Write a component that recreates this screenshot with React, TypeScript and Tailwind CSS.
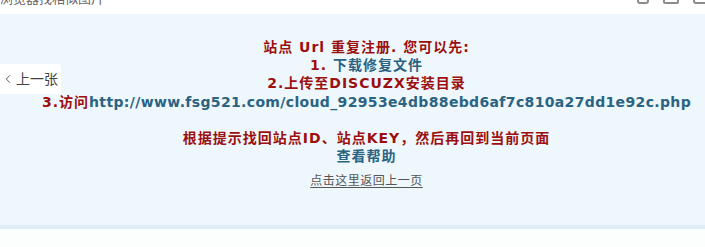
import { ChevronLeft } from "lucide-react";

const red = "text-[#9c0f0f] tracking-[1px]";
const blue = "text-[#2a6383] tracking-[1px]";

export default function App() {
  return (
    <div
      className="relative h-[247px] w-[705px] overflow-hidden bg-white"
      style={{ fontFamily: '"DejaVu Sans", "Noto Sans CJK SC", sans-serif' }}
    >
      {/* top strip, cut off by the window */}
      <div className="relative flex h-[14px] items-start justify-between overflow-hidden">
        <span className="-mt-[9px] text-[13px] leading-[15px] text-[#666]">
          浏览器找相似图片
        </span>
        <div className="-mt-[8px] flex items-start gap-[14px]">
          <span className="h-[12px] w-[12px] rounded-[3px] border-2 border-[#8c8c8c]" />
          <span className="h-[12px] w-[16px] rounded-[2px] border-2 border-[#8c8c8c]" />
          <span className="-mr-[4px] h-[12px] w-[16px] rounded-[3px] border-2 border-[#8c8c8c]" />
        </div>
      </div>

      <div className="h-[211px] bg-[#eef7fb] pl-[28px] pt-[24px] text-center text-[14px] font-bold leading-[18px]">
        <p className={red}>站点 Url 重复注册. 您可以先:</p>
        <p>
          <span className={red}>1. </span>
          <span className={blue}>下载修复文件</span>
        </p>
        <p className={red}>2.上传至DISCUZX安装目录</p>
        <p className="pt-[1px]">
          <span className={red}>3.访问</span>
          <span className="text-[#2a6383] tracking-[0.35px]">
            http://www.fsg521.com/cloud_92953e4db88ebd6af7c810a27dd1e92c.php
          </span>
        </p>
        <p>&nbsp;</p>
        <p className={red}>根据提示找回站点ID、站点KEY，然后再回到当前页面</p>
        <p className={blue}>查看帮助</p>
        <p className="mt-[7px] text-[12px] font-normal tracking-[0.5px] text-[#555] underline underline-offset-2">
          点击这里返回上一页
        </p>
      </div>
      <div className="h-[4px] bg-[#dcedf6]" />
      <div className="h-full bg-[#fcfefe]" />

      {/* previous-image button overlaying the page */}
      <div className="absolute left-0 top-[64px] flex h-[30px] w-[61px] items-center rounded-r-[3px] bg-white pl-[1px] text-[14px] text-[#444]">
        <ChevronLeft className="h-[14px] w-[14px]" strokeWidth={1.5} />
        <span className="ml-[1px]">上一张</span>
      </div>
    </div>
  );
}
